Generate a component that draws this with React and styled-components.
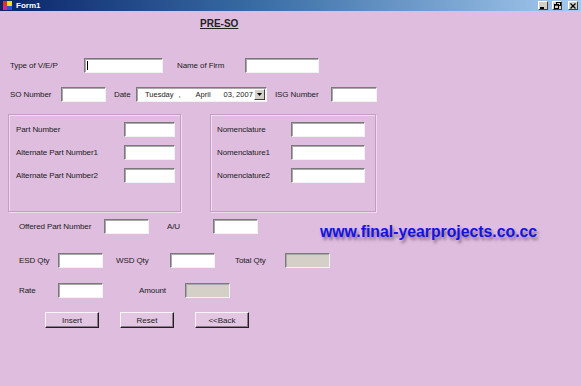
import React from "react";
import styled, { createGlobalStyle } from "styled-components";

const GlobalStyle = createGlobalStyle`
  html, body {
    margin: 0;
    padding: 0;
  }
  body {
    font-family: "Liberation Sans", Arial, sans-serif;
    background: #dfbddf;
    color: #1a1a1a;
  }
`;

const Window = styled.div`
  width: 581px;
  height: 386px;
  display: flex;
  flex-direction: column;
  background: #dfbddf;
  overflow: hidden;
`;

const TitleBar = styled.div`
  height: 11px;
  display: flex;
  align-items: center;
  gap: 4px;
  padding: 0 3px 0 3px;
  background: linear-gradient(to right, #0a246a 0%, #3a6ea5 45%, #a6caf0 100%);
`;

const TitleText = styled.span`
  flex: 1;
  color: #fff;
  font-size: 8px;
  font-weight: bold;
  line-height: 11px;
`;

const CaptionButton = styled.div`
  width: 10px;
  height: 9px;
  display: flex;
  align-items: center;
  justify-content: center;
  background: #d4d0c8;
  border: 1px solid;
  border-color: #fff #404040 #404040 #fff;
  box-sizing: border-box;
  margin-left: ${(p) => (p.$gap ? "2px" : "0")};
`;

const Body = styled.div`
  flex: 1;
  display: flex;
  flex-direction: column;
  font-size: 8px;
`;

const Heading = styled.div`
  margin: 7px 0 0 200px;
  font-size: 10px;
  line-height: 12px;
  font-weight: bold;
  text-decoration: underline;
  color: #222;
`;

const Row = styled.div`
  display: flex;
  align-items: center;
  height: ${(p) => p.$h || 15}px;
  margin-top: ${(p) => p.$mt}px;
  padding-left: ${(p) => p.$pl}px;
  gap: ${(p) => p.$gap || 0}px;
`;

const Field = styled.div`
  display: flex;
  align-items: center;
  margin-left: ${(p) => p.$ml || 0}px;
`;

const Label = styled.span`
  width: ${(p) => p.$w}px;
  flex-shrink: 0;
  font-size: 8px;
  line-height: 10px;
  letter-spacing: -0.1px;
  white-space: nowrap;
  color: #1c1c1c;
`;

const Input = styled.div`
  position: relative;
  width: ${(p) => p.$w}px;
  height: 15px;
  box-sizing: border-box;
  background: ${(p) => (p.$disabled ? "#d4d0c8" : "#fff")};
  border: 1px solid;
  border-color: #7a7a7a #f2f2f2 #f2f2f2 #7a7a7a;
  box-shadow: inset 1px 1px 0 #a8a8a8;

  &::after {
    content: "";
    display: ${(p) => (p.$focused ? "block" : "none")};
    position: absolute;
    left: 2px;
    top: 2px;
    width: 1px;
    height: 9px;
    background: #000;
  }
`;

const DatePicker = styled.div`
  width: 131px;
  height: 15px;
  box-sizing: border-box;
  display: flex;
  align-items: center;
  background: #fff;
  border: 1px solid;
  border-color: #7a7a7a #f2f2f2 #f2f2f2 #7a7a7a;
  box-shadow: inset 1px 1px 0 #a8a8a8;
  padding-right: 1px;
`;

const DatePart = styled.span`
  margin-left: ${(p) => p.$ml}px;
  font-size: 7.5px;
  line-height: 10px;
  white-space: nowrap;
  color: #1c1c1c;
`;

const DropButton = styled.div`
  margin-left: auto;
  width: 11px;
  height: 11px;
  box-sizing: border-box;
  display: flex;
  align-items: center;
  justify-content: center;
  background: #d4d0c8;
  border: 1px solid;
  border-color: #fff #404040 #404040 #fff;
`;

const Groups = styled.div`
  display: flex;
  margin-top: 12px;
  padding-left: 8px;
  gap: 29px;
`;

const GroupBox = styled.div`
  width: ${(p) => p.$w}px;
  height: 98px;
  box-sizing: border-box;
  border: 1px solid #c79bc7;
  box-shadow: inset 1px 1px 0 #efdcef, 1px 1px 0 #efdcef;
  display: flex;
  flex-direction: column;
  gap: 8px;
  padding: 7px 0 0 ${(p) => p.$pl}px;
`;

const Watermark = styled.span`
  align-self: flex-start;
  margin: 3px 0 -8px 62px;
  font-size: 15.8px;
  line-height: 20px;
  font-weight: bold;
  color: #1212e6;
  text-shadow: 2px 3px 3px rgba(70, 40, 70, 0.55);
  white-space: nowrap;
`;

const Button = styled.div`
  width: 54px;
  height: 16px;
  box-sizing: border-box;
  display: flex;
  align-items: center;
  justify-content: center;
  font-size: 8px;
  background: #e2c6e2;
  border: 1px solid;
  border-color: #fbf4fb #202020 #202020 #fbf4fb;
  box-shadow: inset -1px -1px 0 #8a7a8a;
  color: #1c1c1c;
`;

function FormIcon() {
  return (
    <svg width="9" height="9" viewBox="0 0 9 9">
      <rect x="0" y="0" width="4" height="4" fill="#e03030" />
      <rect x="4" y="0" width="5" height="5" fill="#f0e020" />
      <rect x="0" y="4" width="4" height="5" fill="#e02090" />
      <rect x="4" y="5" width="5" height="4" fill="#3050e0" />
    </svg>
  );
}

function Caption() {
  return (
    <TitleBar>
      <FormIcon />
      <TitleText>Form1</TitleText>
      <CaptionButton>
        <svg width="6" height="6" viewBox="0 0 6 6">
          <rect x="0" y="4" width="4" height="2" fill="#000" />
        </svg>
      </CaptionButton>
      <CaptionButton>
        <svg width="7" height="7" viewBox="0 0 7 7" fill="none" stroke="#000">
          <rect x="2.5" y="0.5" width="4" height="3" />
          <rect x="0.5" y="2.5" width="4" height="4" fill="#d4d0c8" />
          <line x1="0.5" y1="3.2" x2="4.5" y2="3.2" />
        </svg>
      </CaptionButton>
      <CaptionButton $gap>
        <svg width="6" height="6" viewBox="0 0 6 6" stroke="#000" strokeWidth="1.3">
          <line x1="0.5" y1="0.5" x2="5.5" y2="5.5" />
          <line x1="5.5" y1="0.5" x2="0.5" y2="5.5" />
        </svg>
      </CaptionButton>
    </TitleBar>
  );
}

function GroupRow({ label, lw, iw }) {
  return (
    <Field>
      <Label $w={lw}>{label}</Label>
      <Input $w={iw} />
    </Field>
  );
}

export default function App() {
  return (
    <Window>
      <GlobalStyle />
      <Caption />
      <Body>
        <Heading>PRE-SO</Heading>

        <Row $mt={28} $pl={10}>
          <Label $w={74}>Type of V/E/P</Label>
          <Input $w={79} $focused />
          <Field $ml={14}>
            <Label $w={68}>Name of Firm</Label>
            <Input $w={74} />
          </Field>
        </Row>

        <Row $mt={14} $pl={10}>
          <Label $w={51}>SO Number</Label>
          <Input $w={45} />
          <Field $ml={8}>
            <Label $w={22}>Date</Label>
            <DatePicker>
              <DatePart $ml={8}>Tuesday</DatePart>
              <DatePart $ml={5}>,</DatePart>
              <DatePart $ml={15}>April</DatePart>
              <DatePart $ml={13}>03, 2007</DatePart>
              <DropButton>
                <svg width="5" height="3" viewBox="0 0 5 3">
                  <polygon points="0,0 5,0 2.5,3" fill="#000" />
                </svg>
              </DropButton>
            </DatePicker>
          </Field>
          <Field $ml={8}>
            <Label $w={56}>ISG Number</Label>
            <Input $w={46} />
          </Field>
        </Row>

        <Groups>
          <GroupBox $w={173} $pl={7}>
            <GroupRow label="Part Number" lw={108} iw={51} />
            <GroupRow label="Alternate Part Number1" lw={108} iw={51} />
            <GroupRow label="Alternate Part Number2" lw={108} iw={51} />
          </GroupBox>
          <GroupBox $w={166} $pl={6}>
            <GroupRow label="Nomenclature" lw={74} iw={74} />
            <GroupRow label="Nomenclature1" lw={74} iw={74} />
            <GroupRow label="Nomenclature2" lw={74} iw={74} />
          </GroupBox>
        </Groups>

        <Row $mt={7} $pl={19}>
          <Label $w={85}>Offered Part Number</Label>
          <Input $w={45} />
          <Field $ml={18}>
            <Label $w={46}>A/U</Label>
            <Input $w={45} />
          </Field>
          <Watermark>www.final-yearprojects.co.cc</Watermark>
        </Row>

        <Row $mt={19} $pl={19}>
          <Label $w={39}>ESD Qty</Label>
          <Input $w={45} />
          <Field $ml={13}>
            <Label $w={54}>WSD Qty</Label>
            <Input $w={45} />
          </Field>
          <Field $ml={20}>
            <Label $w={50}>Total Qty</Label>
            <Input $w={45} $disabled />
          </Field>
        </Row>

        <Row $mt={15} $pl={19}>
          <Label $w={39}>Rate</Label>
          <Input $w={45} />
          <Field $ml={36}>
            <Label $w={46}>Amount</Label>
            <Input $w={45} $disabled />
          </Field>
        </Row>

        <Row $mt={14} $pl={45} $gap={21} $h={16}>
          <Button>Insert</Button>
          <Button>Reset</Button>
          <Button>&lt;&lt;Back</Button>
        </Row>
      </Body>
    </Window>
  );
}
